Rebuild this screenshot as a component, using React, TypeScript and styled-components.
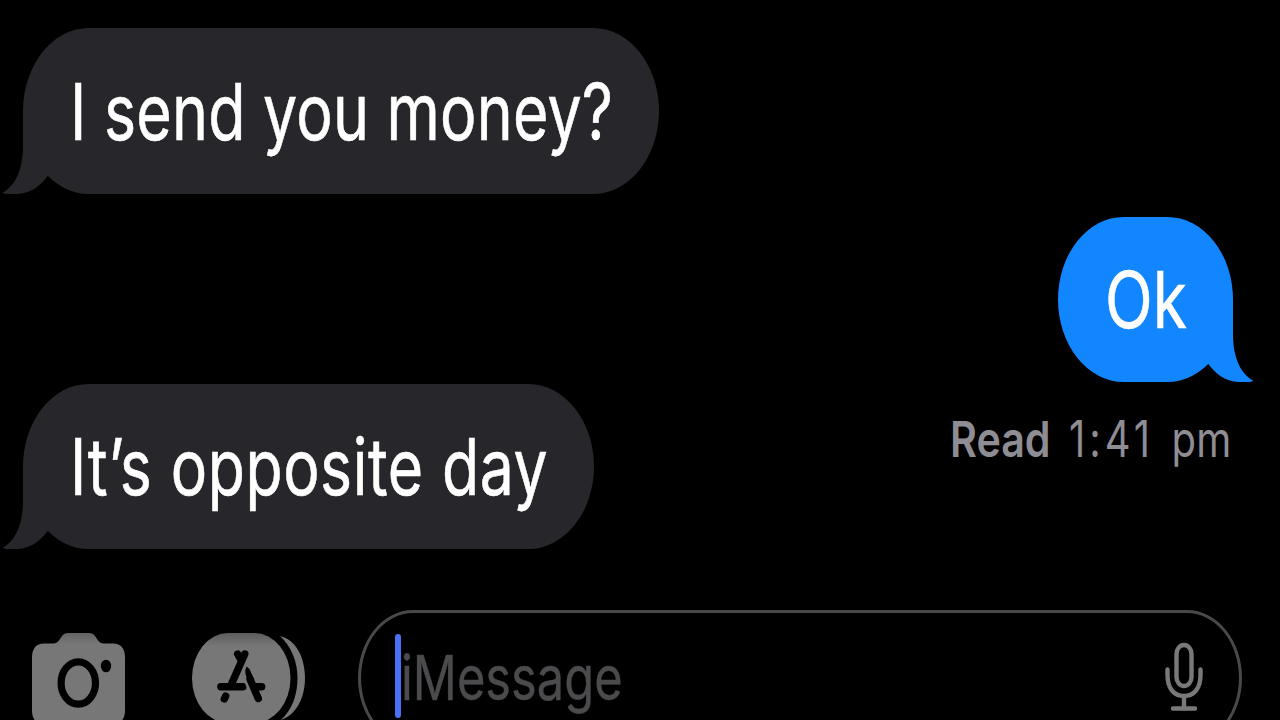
import styled, { createGlobalStyle } from 'styled-components';

const GlobalStyle = createGlobalStyle`
  body {
    margin: 0;
    background: #000;
    overflow: hidden;
  }
`;

const Screen = styled.div`
  display: flex;
  flex-direction: column;
  box-sizing: border-box;
  width: 1280px;
  height: 720px;
  padding: 28px 47px 0 23px;
  overflow: hidden;
  background: #000;
  font-family: Inter, 'Liberation Sans', sans-serif;
`;

const Thread = styled.main`
  display: flex;
  flex: none;
  flex-direction: column;
  gap: 23px;
  height: 521px;
`;

const ThreadRow = styled.div<{ $sent?: boolean; $lift?: number }>`
  display: flex;
  align-items: flex-start;
  justify-content: ${({ $sent }) => ($sent ? 'flex-end' : 'space-between')};
  margin-top: -${({ $lift = 0 }) => $lift}px;
`;

const Bubble = styled.div<{ $sent?: boolean; $width: number }>`
  position: relative;
  display: flex;
  flex: none;
  align-items: center;
  box-sizing: border-box;
  width: ${({ $width }) => $width}px;
  height: 165.6px;
  padding: 2px 0 0 47px;
  border-radius: 66px / 83px;
  background: ${({ $sent }) => ($sent ? '#1186ff' : '#27262b')};
  color: #fff;
`;

const Tail = styled.svg<{ $sent?: boolean }>`
  position: absolute;
  bottom: 0;
  ${({ $sent }) => ($sent ? 'right: -20px; transform: scaleX(-1);' : 'left: -20px;')}
  fill: ${({ $sent }) => ($sent ? '#1186ff' : '#27262b')};
`;

interface LabelProps {
  $size: number;
  $stretch: number;
  $weight?: number;
  $spacing?: number;
  $wordSpacing?: number;
  $outline?: number;
}

const Label = styled.span<LabelProps>`
  display: block;
  flex: none;
  font-size: ${({ $size }) => $size}px;
  font-weight: ${({ $weight = 400 }) => $weight};
  letter-spacing: ${({ $spacing = 0 }) => $spacing}px;
  word-spacing: ${({ $wordSpacing = 0 }) => $wordSpacing}px;
  line-height: 1;
  white-space: nowrap;
  transform: scaleX(${({ $stretch }) => $stretch});
  transform-origin: left center;
  -webkit-text-stroke: ${({ $outline = 0 }) => $outline}px currentColor;
`;

const Placeholder = styled(Label)`
  padding-top: 3px;
`;

const Digits = styled.span`
  letter-spacing: 5px;
`;

const Receipt = styled.div`
  display: grid;
  grid-template-columns: 119px 164px;
  height: 50px;
  margin-top: 30px;
  color: #8e8d93;
`;

const Composer = styled.div`
  display: flex;
  flex: none;
  align-items: flex-start;
  margin: 61px -9px 0 9px;
`;

const IconButton = styled.button<{ $gap: number }>`
  display: block;
  flex: none;
  margin: 22px ${({ $gap }) => $gap}px 0 0;
  padding: 0;
  border: 0;
  background: none;
`;

const Input = styled.div`
  display: flex;
  flex: 1;
  align-items: center;
  box-sizing: border-box;
  height: 136px;
  padding: 0 36px 4px 34px;
  border: 3px solid #49494c;
  border-radius: 55px / 68px;
  color: #4b4b4e;
`;

const Caret = styled.i`
  flex: none;
  width: 6px;
  height: 84px;
  border-radius: 3px;
  background: #4a70f5;
`;

const MicSlot = styled.div`
  flex: none;
  height: 69px;
  margin-left: auto;
`;

interface MessageProps {
  text: string;
  width: number;
  stretch: number;
  spacing?: number;
  wordSpacing?: number;
  sent?: boolean;
}

const Message: React.FC<MessageProps> = ({
  text,
  width,
  stretch,
  spacing,
  wordSpacing,
  sent,
}) => (
  <Bubble $sent={sent} $width={width}>
    <Tail $sent={sent} width="70" height="84" viewBox="0 0 70 84">
      <path d="M20 0V36C20 60 12 76 0 82.5Q0 83.5 4 84H15C29 83 38 75 45 65.5L66 30L40 0Z" />
    </Tail>
    <Label
      $size={78}
      $stretch={stretch}
      $spacing={spacing}
      $wordSpacing={wordSpacing}
      $outline={0.6}
    >
      {text}
    </Label>
  </Bubble>
);

const CameraIcon = () => (
  <svg display="block" width="93" height="92" viewBox="32 632 93 92">
    <defs>
      <linearGradient id="camera" x1="0" y1="633" x2="0" y2="644" gradientUnits="userSpaceOnUse">
        <stop stopColor="#636363" />
        <stop offset="1" stopColor="#777" />
      </linearGradient>
    </defs>
    <path
      fill="url(#camera)"
      d="M44 643.5H53C56 643.5 58 642 60 639L62 636Q64 633 68 633H89Q93 633 95 636L97 639C99 642 101 643.5 104 643.5H113Q125 643.5 125 658V710Q125 724 113 724H44Q32 724 32 710V658Q32 643.5 44 643.5Z"
    />
    <ellipse cx="78.3" cy="683" rx="17.2" ry="21.2" fill="none" stroke="#000" strokeWidth="7.2" />
    <ellipse cx="106" cy="666" rx="5.2" ry="6.3" fill="#000" />
  </svg>
);

const AppsIcon = () => (
  <svg display="block" width="113" height="92" viewBox="192 632 113 92">
    <defs>
      <linearGradient id="apps" x1="0" y1="633" x2="0" y2="646" gradientUnits="userSpaceOnUse">
        <stop stopColor="#5c5c5c" />
        <stop offset="1" stopColor="#777" />
      </linearGradient>
    </defs>
    <rect x="192" y="633" width="98.5" height="90" rx="36" ry="45" fill="url(#apps)" />
    <path
      fill="#777"
      d="M280 636C296 640 305 657 305 678C305 698 296 715 281 720C292 710 297.5 695 297.5 678C297.5 661 291 646 280 636Z"
    />
    <g fill="none" stroke="#000" strokeWidth="7.4" strokeLinecap="round">
      <path d="M244.8 654L231.5 684M237.7 654L241 660" />
      <path d="M220.8 686.7H243M256 686.7H261.7" />
      <path d="M225.7 696L224.3 699" />
      <path stroke="#777" strokeWidth="5" strokeLinecap="butt" d="M243.5 672L251 692" />
      <path d="M250 679L258.3 698.5" />
    </g>
    <path d="M246.5 666.5Q244.5 670 245.5 674L248 681L254 679L249.5 669Z" />
  </svg>
);

const MicIcon = () => (
  <svg display="block" width="38" height="70" viewBox="1165.5 642 38 70">
    <g fill="none" stroke="#79797b" strokeWidth="4.4" strokeLinecap="round">
      <rect x="1177" y="645" width="15" height="41" rx="7.5" ry="9" />
      <path d="M1168 669.5V675C1168 688 1174 696 1184.5 696S1201 688 1201 675V669.5M1184.5 697V707M1173.5 708.5H1195.5" />
    </g>
  </svg>
);

const App: React.FC = () => {
  return (
    <>
      <GlobalStyle />
      <Screen>
        <Thread>
          <ThreadRow>
            <Message text="I send you money?" width={636} stretch={0.78} spacing={0.3} />
          </ThreadRow>
          <ThreadRow $sent>
            <Message text="Ok" width={175} stretch={0.8} sent />
          </ThreadRow>
          <ThreadRow $lift={21.5}>
            <Message
              text="It’s opposite day"
              width={571}
              stretch={0.778}
              spacing={0.7}
              wordSpacing={1}
            />
            <Receipt>
              <Label $size={50} $stretch={0.825} $weight={600}>
                Read
              </Label>
              <Label $size={50} $stretch={0.8} $spacing={0.5} $wordSpacing={7}>
                <Digits>1:41</Digits> pm
              </Label>
            </Receipt>
          </ThreadRow>
        </Thread>
        <Composer>
          <IconButton $gap={67} aria-label="Camera">
            <CameraIcon />
          </IconButton>
          <IconButton $gap={53} aria-label="Apps">
            <AppsIcon />
          </IconButton>
          <Input>
            <Caret />
            <Placeholder $size={62} $stretch={0.787} $outline={0.4}>
              iMessage
            </Placeholder>
            <MicSlot>
              <MicIcon />
            </MicSlot>
          </Input>
        </Composer>
      </Screen>
    </>
  );
};

export default App;
